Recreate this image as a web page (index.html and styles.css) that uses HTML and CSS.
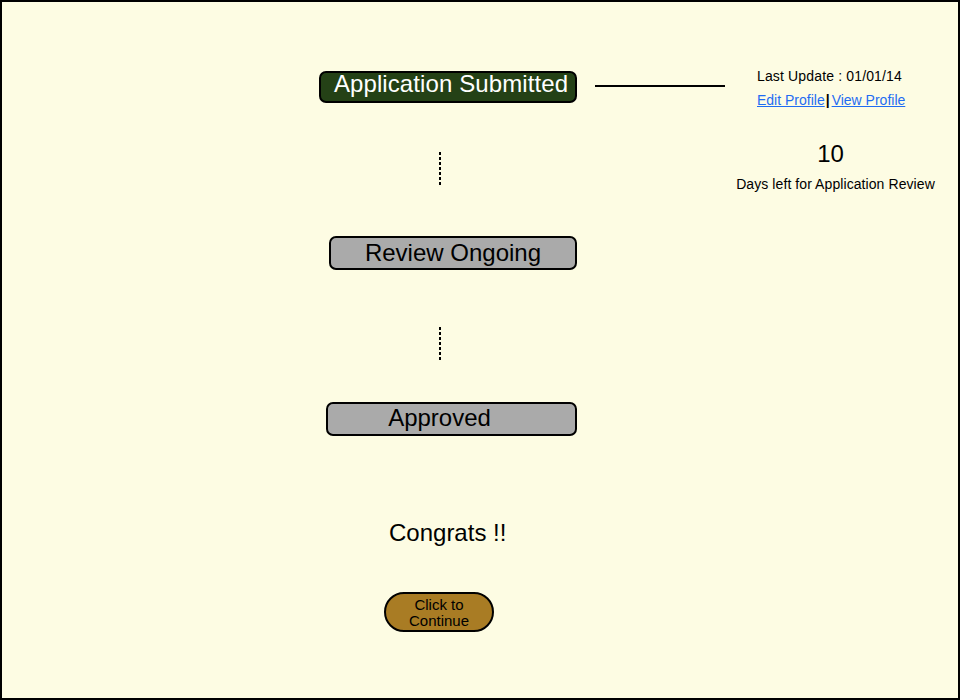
FILE: index.html
```html
<!DOCTYPE html>
<html lang="en">
<head>
<meta charset="utf-8">
<title>Application Status</title>
<link rel="stylesheet" href="styles.css">
</head>
<body>
<div class="frame">
  <div class="flow">
    <div class="step step-done">Application Submitted</div>
    <div class="dots dots-first"></div>
    <div class="step step-review">Review Ongoing</div>
    <div class="dots dots-second"></div>
    <div class="step step-approved">Approved</div>
    <div class="congrats">Congrats !!</div>
    <button class="continue" type="button">Click to<br>Continue</button>
  </div>
  <div class="connector"></div>
  <aside class="info">
    <div class="meta">
      <div class="updated">Last Update : 01/01/14</div>
      <div class="links"><a href="#">Edit Profile</a><span class="sep">|</span><a href="#">View Profile</a></div>
    </div>
    <div class="count">10</div>
    <div class="count-label">Days left for Application Review</div>
  </aside>
</div>
</body>
</html>
```

FILE: styles.css
```css
html, body {
  margin: 0;
  padding: 0;
}

body {
  font-family: "Liberation Sans", Arial, sans-serif;
  color: #000;
}

.frame {
  width: 960px;
  height: 700px;
  box-sizing: border-box;
  border: 2px solid #000;
  background: #fdfce3;
  display: flex;
  align-items: flex-start;
  overflow: hidden;
}

.flow {
  width: 593px;
  flex: none;
  display: flex;
  flex-direction: column;
  align-items: flex-start;
}

.step {
  box-sizing: border-box;
  border: 2px solid #000;
  border-radius: 7px;
  font-size: 24px;
  text-align: center;
  white-space: nowrap;
}

.step-done {
  margin: 69px 0 0 317px;
  width: 258px;
  height: 32px;
  line-height: 21px;
  padding-left: 6px;
  letter-spacing: 0.1px;
  background: #244116;
  color: #fff;
}

.step-review {
  margin: 51px 0 0 327px;
  width: 248px;
  height: 34px;
  line-height: 29px;
  background: #aaaaaa;
}

.step-approved {
  margin: 42px 0 0 324px;
  width: 251px;
  height: 34px;
  line-height: 27px;
  padding-right: 24px;
  background: #aaaaaa;
}

.dots {
  width: 2px;
  height: 33px;
  margin-left: 437px;
  background: repeating-linear-gradient(to bottom, #000 0 3px, transparent 3px 5px);
}

.dots-first {
  margin-top: 49px;
}

.dots-second {
  margin-top: 57px;
}

.congrats {
  margin: 83px 0 0 387px;
  font-size: 24px;
  line-height: 28px;
  white-space: nowrap;
}

.continue {
  margin: 45px 0 0 382px;
  width: 110px;
  height: 40px;
  box-sizing: border-box;
  border: 2px solid #000;
  border-radius: 20px;
  background: #a97c24;
  color: #000;
  font-family: "Liberation Sans", Arial, sans-serif;
  font-size: 15px;
  line-height: 16px;
  padding: 1px 0 0;
  text-align: center;
  display: block;
}

.connector {
  flex: none;
  width: 130px;
  height: 2px;
  margin-top: 83px;
  background: #000;
}

.info {
  flex: none;
  width: 200px;
  margin-left: 11px;
  display: flex;
  flex-direction: column;
  font-size: 14px;
  line-height: 16px;
}

.meta {
  margin: 66px 0 0 21px;
  display: flex;
  flex-direction: column;
  gap: 8px;
}

.updated {
  white-space: nowrap;
  letter-spacing: 0.15px;
}

.links {
  white-space: nowrap;
}

.links a {
  color: #1f6cf2;
  text-decoration: underline;
}

.sep {
  font-weight: bold;
  margin: 0 2px 0 1px;
}

.count {
  margin-top: 32px;
  font-size: 24px;
  line-height: 28px;
  text-align: center;
  padding-right: 11px;
}

.count-label {
  margin-top: 8px;
  text-align: center;
  white-space: nowrap;
  letter-spacing: 0.08px;
  padding-right: 1px;
}
```
